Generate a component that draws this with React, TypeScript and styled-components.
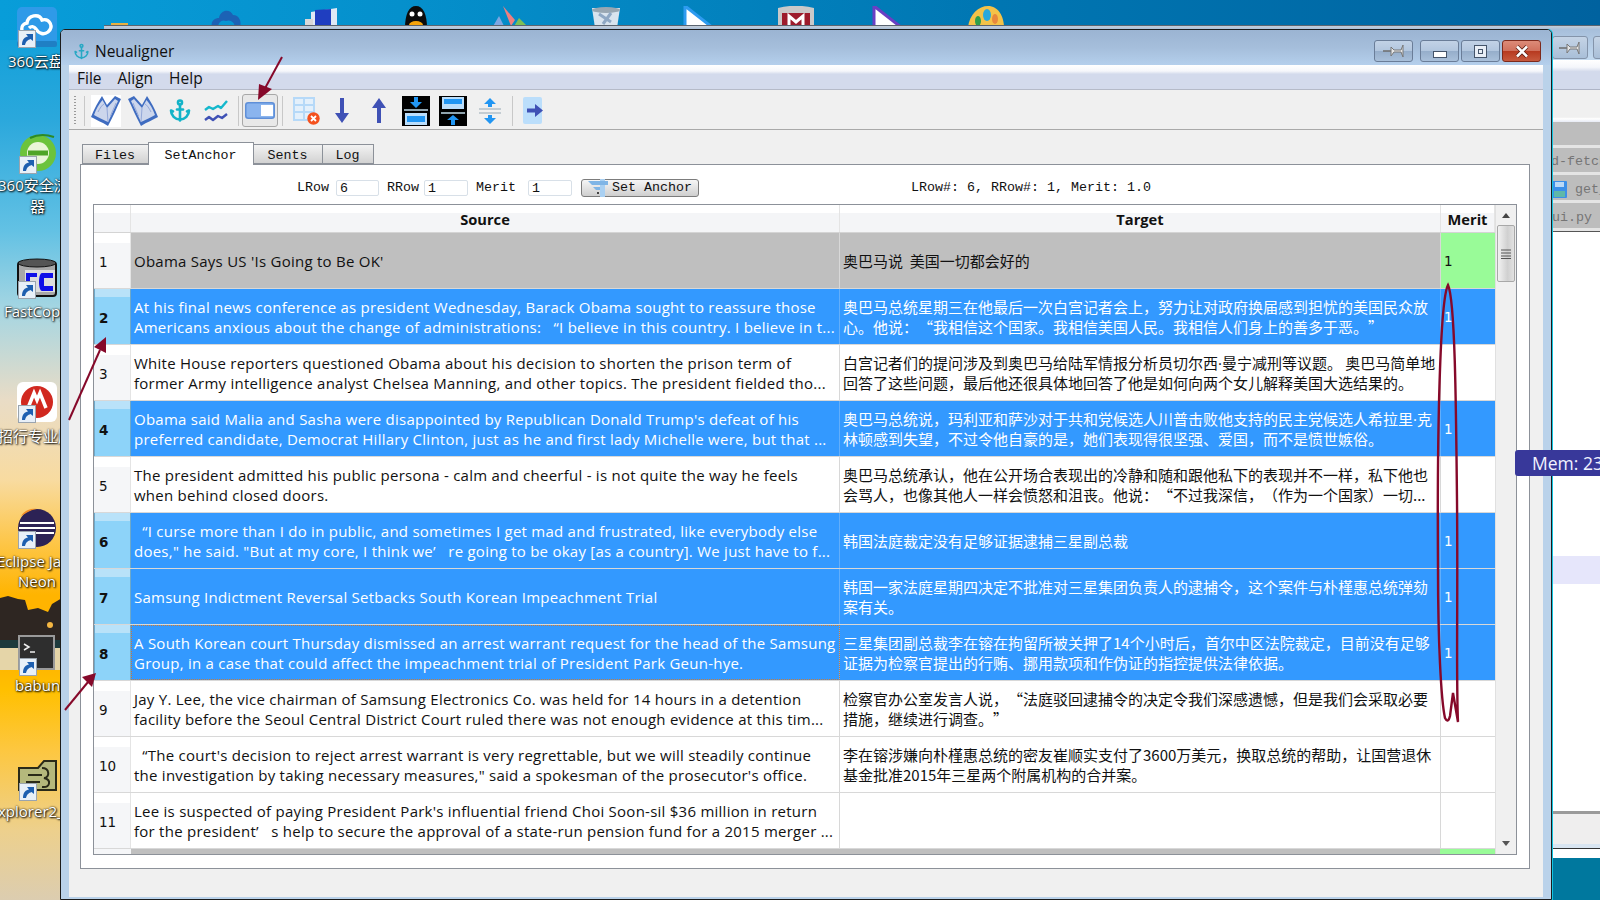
import { Anchor } from "lucide-react";
import styled, { createGlobalStyle } from "styled-components";

const GlobalStyle = createGlobalStyle`
  html, body {
    margin: 0;
    padding: 0;
    background: #000;
  }
`;

const UI_FONT = `"Open Sans", "Noto Sans CJK SC", sans-serif`;
const CJK_FONT = `"Noto Sans CJK SC", "Open Sans", sans-serif`;
const MONO_FONT = `"Liberation Mono", "Noto Sans CJK SC", monospace`;
const DIGIT_FONT = `"DejaVu Sans", sans-serif`;

const Desktop = styled.div`
  position: relative;
  width: 1600px;
  height: 900px;
  overflow: hidden;
  font-family: ${UI_FONT};
  background: linear-gradient(
    to bottom,
    #089dd9 0,
    #2ba8dc 120px,
    #62c1e4 230px,
    #a6d6e2 310px,
    #e9dcc6 400px,
    #f8dba0 480px,
    #fdc74c 540px,
    #ffb400 595px,
    #ffb400 660px,
    #ffc000 690px,
    #fdc740 750px,
    #edd08c 830px,
    #dccdb0 900px
  );
`;

const TopBand = styled.div`
  position: absolute;
  inset: 0 0 auto 0;
  height: 40px;
  background: linear-gradient(to right, #089dd9 0, #0590cc 400px, #0076b2 1000px, #00629f 1600px);
`;

const Skyline = styled.svg`
  position: absolute;
  left: 0;
  top: 590px;
`;

const TealCorner = styled.div`
  position: absolute;
  left: 1552px;
  right: 0;
  top: 857px;
  bottom: 0;
  background: #00789e;
`;

const TopIcons = styled.div`
  position: absolute;
  left: 178px;
  top: 6px;
  display: flex;
`;

const TopSlot = styled.div`
  width: 95px;
  height: 22px;
  display: flex;
  justify-content: center;
`;

const ShelfIcon = styled.div`
  position: absolute;
  left: 111px;
  top: 23px;
  width: 17px;
  height: 4px;
  background: #e8b040;
`;

const IconBox = styled.div<{ $x: number; $y: number }>`
  position: absolute;
  left: ${(p) => p.$x}px;
  top: ${(p) => p.$y}px;
  width: 40px;
  height: 40px;
`;

const ShortcutMark = styled.svg`
  position: absolute;
  left: 1px;
  bottom: -1px;
`;

const IconLabel = styled.div<{ $x: number; $y: number }>`
  position: absolute;
  left: ${(p) => p.$x}px;
  top: ${(p) => p.$y}px;
  color: #fff;
  font-size: 15px;
  line-height: 20px;
  white-space: nowrap;
  text-shadow: 0 0 2px #000, 1px 1px 2px #000;
`;

const BackWindow = styled.div`
  position: absolute;
  left: 104px;
  right: 0;
  top: 25px;
  height: 832px;
  display: flex;
  flex-direction: column;
  border-top: 1px solid #5b6470;
  background: #fff;
`;

const BackTitle = styled.div`
  height: 34px;
  flex: none;
  position: relative;
  background: linear-gradient(to bottom, #c5ced8 0, #a7bfdb 10%, #c3daf0 100%);
`;

const BackPin = styled.div`
  position: absolute;
  left: 1448px;
  top: 10px;
  width: 34px;
  height: 21px;
  display: flex;
  align-items: center;
  justify-content: center;
  border: 1px solid #8494aa;
  border-radius: 3px;
  background: linear-gradient(to bottom, #c5d4e6, #a9bfd8);
`;

const BackPinNext = styled(BackPin)`
  left: 1489px;
`;

const BackMenu = styled.div`
  height: 29px;
  flex: none;
  background: linear-gradient(to bottom, #fff 0, #f4f6fb 25%, #d3daec 40%, #d3daec 100%);
  border-bottom: 1px solid #aeb4c6;
`;

const BackStrip = styled.div`
  height: 32px;
  flex: none;
  background: linear-gradient(to bottom, #f0f0f0 0, #f0f0f0 85%, #fff 90%, #e6eaf4 100%);
`;

const BackFile = styled.div<{ $pad: number; $h: number }>`
  height: ${(p) => p.$h}px;
  flex: none;
  box-sizing: border-box;
  display: flex;
  align-items: center;
  gap: 8px;
  padding: 3px 0 0 ${(p) => p.$pad}px;
  background: #bdbdbd;
  border-bottom: 3px solid #e4e4e4;
  color: #757575;
  font: 13.33px ${MONO_FONT};
  white-space: nowrap;
`;

const BackSpacer = styled.div<{ $h: number; $bg?: string }>`
  height: ${(p) => p.$h}px;
  flex: none;
  background: ${(p) => p.$bg ?? "#fff"};
`;

const MainWindow = styled.div`
  position: absolute;
  left: 60px;
  right: 48px;
  top: 29px;
  bottom: 0;
  display: flex;
  flex-direction: column;
  border: 1px solid #1c1c1c;
  border-radius: 5px 5px 0 0;
  background: #bad2ea;
  box-shadow: 1px 0 0 #12c4e0;
`;

const TitleBar = styled.div`
  height: 35px;
  flex: none;
  box-sizing: border-box;
  display: flex;
  align-items: center;
  padding: 7px 10px 0 12px;
  border-radius: 4px 4px 0 0;
  background: linear-gradient(to bottom, #9bb4d2 0, #a5bedb 50%, #b4cfec 100%);
  color: #111;
  font-size: 15.5px;
`;

const TitleText = styled.span`
  margin-left: 5px;
  flex: 1;
`;

const WinButton = styled.div<{ $close?: boolean; $ml?: number }>`
  width: 39px;
  height: 22px;
  margin-left: ${(p) => p.$ml ?? 2}px;
  display: flex;
  align-items: center;
  justify-content: center;
  box-sizing: border-box;
  border: 1px solid ${(p) => (p.$close ? "#7d2a1c" : "#6a7d98")};
  border-radius: 3px;
  background: ${(p) =>
    p.$close
      ? "linear-gradient(to bottom, #dc8b78 0, #d0705c 50%, #b73a20 52%, #c75a3e 100%)"
      : "linear-gradient(to bottom, #c2d2e6 0, #b2c6de 50%, #96aecb 52%, #a9c0da 100%)"};
`;

const MinGlyph = styled.div`
  width: 12px;
  height: 5px;
  margin-top: 6px;
  background: #fff;
  border: 1px solid #44546a;
`;

const MaxGlyph = styled.div`
  width: 11px;
  height: 11px;
  display: flex;
  align-items: center;
  justify-content: center;
  background: #e8eef6;
  border: 1px solid #44546a;

  &::after {
    content: "";
    width: 3px;
    height: 3px;
    border: 1px solid #44546a;
  }
`;

const Client = styled.div`
  flex: 1;
  display: flex;
  flex-direction: column;
  margin: 0 8px 2px;
  min-height: 0;
  background: #f0f0f0;
`;

const MenuBar = styled.div`
  height: 25px;
  flex: none;
  display: flex;
  align-items: center;
  gap: 16px;
  padding: 2px 0 0 8px;
  box-sizing: border-box;
  background: linear-gradient(to bottom, #fff 0, #f6f7fb 25%, #d3daec 38%, #d3daec 100%);
  border-bottom: 1px solid #b5bac8;
  color: #111;
  font-size: 15.5px;
`;

const Toolbar = styled.div`
  height: 40px;
  flex: none;
  box-sizing: border-box;
  padding-top: 2px;
  display: flex;
  align-items: center;
  border-bottom: 1px solid #a9a9a9;
  background: #f0f0f0;
`;

const Grip = styled.div`
  width: 2px;
  height: 30px;
  margin-left: 5px;
  background-image: linear-gradient(to bottom, #9a9a9a 1px, transparent 1px);
  background-size: 2px 3px;
`;

const ToolSep = styled.div<{ $ml: number }>`
  width: 1px;
  height: 30px;
  margin-left: ${(p) => p.$ml}px;
  background: #c8c8c8;
`;

const Tool = styled.div<{ $w: number; $ml: number }>`
  width: ${(p) => p.$w}px;
  margin-left: ${(p) => p.$ml}px;
  flex: none;
  display: flex;
  align-items: center;
  justify-content: center;
`;

const ToggleFrame = styled.div`
  width: 36px;
  height: 33px;
  margin-left: 3px;
  display: flex;
  align-items: center;
  justify-content: center;
  box-sizing: border-box;
  border: 1px solid #a8a8a8;
  border-radius: 3px;
  background: #e8e8e8;
`;

const TabArea = styled.div`
  flex: 1;
  display: flex;
  flex-direction: column;
  padding: 12px 13px 28px 11px;
  min-height: 0;
`;

const TabRow = styled.div`
  height: 22px;
  flex: none;
  display: flex;
  align-items: flex-end;
  padding-left: 2px;
  position: relative;
  z-index: 1;
`;

const Tab = styled.div<{ $active?: boolean; $w: number }>`
  width: ${(p) => p.$w}px;
  height: ${(p) => (p.$active ? 23 : 20)}px;
  margin-bottom: ${(p) => (p.$active ? -1 : 0)}px;
  margin-right: -1px;
  flex: none;
  box-sizing: border-box;
  display: flex;
  align-items: center;
  justify-content: center;
  padding: 2px 1px 0 0;
  border: 1px solid #8c9199;
  border-bottom: ${(p) => (p.$active ? "none" : "1px solid #8c9199")};
  background: ${(p) => (p.$active ? "#fff" : "linear-gradient(to bottom, #f2f2f2, #d2d2d2)")};
  color: #111;
  font: 13.33px ${MONO_FONT};
`;

const Pane = styled.div`
  flex: 1;
  display: flex;
  flex-direction: column;
  min-height: 0;
  border: 1px solid #8c9199;
  background: #fff;
  padding: 0 12px 13px 12px;
`;

const FormRow = styled.div`
  height: 39px;
  flex: none;
  display: flex;
  align-items: center;
  padding: 6px 0 0 204px;
  box-sizing: border-box;
  color: #111;
  font: 13.33px ${MONO_FONT};
  white-space: pre;
`;

const FieldLabel = styled.span<{ $ml?: number }>`
  margin-left: ${(p) => p.$ml ?? 0}px;
`;

const FieldInput = styled.div<{ $w: number; $ml: number }>`
  width: ${(p) => p.$w}px;
  height: 16px;
  margin-left: ${(p) => p.$ml}px;
  padding: 1px 0 0 3px;
  box-sizing: border-box;
  display: flex;
  align-items: center;
  border: 1px solid #d8e0e8;
  border-radius: 2px;
  background: #fff;
`;

const AnchorButton = styled.div`
  width: 118px;
  height: 18px;
  margin-left: 9px;
  display: flex;
  align-items: center;
  box-sizing: border-box;
  padding-left: 6px;
  gap: 4px;
  border: 1px solid #7c7c7c;
  border-radius: 3px;
  background: linear-gradient(to bottom, #f6f6f6, #cfcfcf);
`;

const StatusText = styled.span`
  margin-left: 212px;
`;

const Table = styled.div`
  flex: 1;
  display: flex;
  min-height: 0;
  border: 1px solid #8c9199;
  background: #fff;
`;

const Grid = styled.div`
  flex: 1;
  min-width: 0;
  display: flex;
  flex-direction: column;
  overflow: hidden;
`;

const HeaderRow = styled.div`
  height: 28px;
  flex: none;
  display: flex;
  box-sizing: border-box;
  border-bottom: 1px solid #d4d4d4;
  background: linear-gradient(to bottom, #fff 0, #fff 30%, #f4f5f7 30%, #f4f5f7 100%);
`;

const HeaderCell = styled.div<{ $w: number }>`
  width: ${(p) => p.$w}px;
  flex: none;
  box-sizing: border-box;
  display: flex;
  align-items: center;
  justify-content: center;
  border-right: 1px solid #e4e4e4;
  color: #111;
  font-size: 14.67px;
  font-weight: 700;
  padding-top: 1px;
`;

const Row = styled.div`
  height: 56px;
  flex: none;
  display: flex;
  box-sizing: border-box;
  border-bottom: 1px solid #d8d8d8;
`;

const RowNumber = styled.div<{ $selected?: boolean }>`
  width: 37px;
  flex: none;
  box-sizing: border-box;
  display: flex;
  align-items: center;
  padding: 2px 0 0 4px;
  color: #111;
  font: ${(p) => (p.$selected ? 700 : 400)} 13.5px ${DIGIT_FONT};
  background: ${(p) =>
    p.$selected
      ? "linear-gradient(to bottom, #b9e2f9 0, #b9e2f9 8px, #8dd3f9 8px, #8dd3f9 100%)"
      : "linear-gradient(to bottom, #fff 0, #fff 10px, #f5f6f8 10px, #f5f6f8 100%)"};
  border-left: 1px solid ${(p) => (p.$selected ? "#6ea9c9" : "transparent")};
  border-right: 1px solid ${(p) => (p.$selected ? "#6ea9c9" : "#e4e4e4")};
`;

const cellBackground = (mode?: "grey" | "selected") =>
  mode === "grey" ? "#bfbfbf" : mode === "selected" ? "#3399ff" : "#fff";

const TextCell = styled.div<{ $w: number; $mode?: "grey" | "selected"; $focus?: boolean }>`
  width: ${(p) => p.$w}px;
  flex: none;
  box-sizing: border-box;
  display: flex;
  flex-direction: column;
  justify-content: center;
  padding-left: 3px;
  overflow: hidden;
  white-space: pre;
  font-size: 15px;
  line-height: 20px;
  color: ${(p) => (p.$mode === "selected" ? "#fff" : "#111")};
  background: ${(p) => cellBackground(p.$mode)};
  border-right: 1px solid ${(p) => (p.$mode === "selected" ? "#62aefb" : "#d8d8d8")};
  outline: ${(p) => (p.$focus ? "1px dotted #c77b3a" : "none")};
  outline-offset: -1px;
`;

const SourceCell = styled(TextCell)`
  letter-spacing: 0.25px;
`;

const TargetCell = styled(TextCell)`
  font-family: ${CJK_FONT};
  text-spacing-trim: space-all;
`;

const NarrowDot = styled.span`
  font-family: "Open Sans", sans-serif;
`;

const MeritCell = styled.div<{ $mode?: "green" | "selected" }>`
  width: 54px;
  flex: none;
  box-sizing: border-box;
  display: flex;
  align-items: center;
  padding: 0 0 0 3px;
  font: 13.5px ${DIGIT_FONT};
  color: ${(p) => (p.$mode === "selected" ? "#fff" : "#111")};
  background: ${(p) =>
    p.$mode === "green" ? "#99fb98" : p.$mode === "selected" ? "#3399ff" : "#fff"};
`;

const Sliver = styled.div`
  height: 6px;
  flex: none;
  display: flex;
`;

const SliverHead = styled.div`
  width: 37px;
  background: #f5f6f8;
`;

const SliverGrey = styled.div`
  flex: 1;
  background: #bfbfbf;
`;

const SliverGreen = styled.div`
  width: 55px;
  background: #99fb98;
`;

const Scrollbar = styled.div`
  width: 21px;
  flex: none;
  box-sizing: border-box;
  display: flex;
  flex-direction: column;
  align-items: center;
  padding-top: 8px;
  background: #f0f0f0;
  border-left: 1px solid #e0e0e0;
`;

const ScrollThumb = styled.div`
  width: 18px;
  height: 57px;
  margin-top: 7px;
  flex: none;
  box-sizing: border-box;
  display: flex;
  align-items: center;
  justify-content: center;
  border: 1px solid #a8a8a8;
  border-radius: 2px;
  background: linear-gradient(to right, #f2f2f2, #d0d0d0 60%, #e2e2e2);
`;

const ScrollTrack = styled.div`
  flex: 1;
`;

const ScrollArrow = styled.div<{ $down?: boolean }>`
  width: 0;
  height: 0;
  flex: none;
  border-left: 4px solid transparent;
  border-right: 4px solid transparent;
  ${(p) => (p.$down ? "border-top: 5px solid #555; margin-bottom: 8px;" : "border-bottom: 5px solid #444;")}
`;

const Annotations = styled.svg`
  position: absolute;
  inset: 0;
  pointer-events: none;
`;

const MemBadge = styled.div`
  position: absolute;
  left: 1515px;
  top: 450px;
  width: 85px;
  height: 26px;
  box-sizing: border-box;
  display: flex;
  align-items: center;
  padding-left: 17px;
  border-radius: 3px 0 0 3px;
  background: #38389a;
  color: #f2f2ff;
  font-size: 17.5px;
  white-space: nowrap;
  overflow: hidden;
`;

const FloppySvg = styled.svg`
  flex: none;
`;

type TableRow = {
  n: number;
  source: string[];
  target: string[];
  merit?: boolean;
  selected?: boolean;
  grey?: boolean;
  focus?: boolean;
};

const rows: TableRow[] = [
  {
    n: 1,
    grey: true,
    merit: true,
    source: ["Obama Says US 'Is Going to Be OK'"],
    target: ["奥巴马说  美国一切都会好的"],
  },
  {
    n: 2,
    selected: true,
    merit: true,
    source: [
      "At his final news conference as president Wednesday, Barack Obama sought to reassure those",
      "Americans anxious about the change of administrations:   “I believe in this country. I believe in t...",
    ],
    target: [
      "奥巴马总统星期三在他最后一次白宫记者会上，努力让对政府换届感到担忧的美国民众放",
      "心。他说：“我相信这个国家。我相信美国人民。我相信人们身上的善多于恶。”",
    ],
  },
  {
    n: 3,
    source: [
      "White House reporters questioned Obama about his decision to shorten the prison term of",
      "former Army intelligence analyst Chelsea Manning, and other topics. The president fielded tho...",
    ],
    target: [
      "白宫记者们的提问涉及到奥巴马给陆军情报分析员切尔西·曼宁减刑等议题。 奥巴马简单地",
      "回答了这些问题，最后他还很具体地回答了他是如何向两个女儿解释美国大选结果的。",
    ],
  },
  {
    n: 4,
    selected: true,
    merit: true,
    source: [
      "Obama said Malia and Sasha were disappointed by Republican Donald Trump's defeat of his",
      "preferred candidate, Democrat Hillary Clinton, just as he and first lady Michelle were, but that ...",
    ],
    target: [
      "奥巴马总统说，玛利亚和萨沙对于共和党候选人川普击败他支持的民主党候选人希拉里·克",
      "林顿感到失望，不过令他自豪的是，她们表现得很坚强、爱国，而不是愤世嫉俗。",
    ],
  },
  {
    n: 5,
    source: [
      "The president admitted his public persona - calm and cheerful - is not quite the way he feels",
      "when behind closed doors.",
    ],
    target: [
      "奥巴马总统承认，他在公开场合表现出的冷静和随和跟他私下的表现并不一样，私下他也",
      "会骂人，也像其他人一样会愤怒和沮丧。他说：“不过我深信，（作为一个国家）一切...",
    ],
  },
  {
    n: 6,
    selected: true,
    merit: true,
    source: [
      "  “I curse more than I do in public, and sometimes I get mad and frustrated, like everybody else",
      'does," he said. "But at my core, I think we’   re going to be okay [as a country]. We just have to f...',
    ],
    target: ["韩国法庭裁定没有足够证据逮捕三星副总裁"],
  },
  {
    n: 7,
    selected: true,
    merit: true,
    source: ["Samsung Indictment Reversal Setbacks South Korean Impeachment Trial"],
    target: [
      "韩国一家法庭星期四决定不批准对三星集团负责人的逮捕令，这个案件与朴槿惠总统弹劾",
      "案有关。",
    ],
  },
  {
    n: 8,
    selected: true,
    merit: true,
    focus: true,
    source: [
      "A South Korean court Thursday dismissed an arrest warrant request for the head of the Samsung",
      "Group, in a case that could affect the impeachment trial of President Park Geun-hye.",
    ],
    target: [
      "三星集团副总裁李在镕在拘留所被关押了14个小时后，首尔中区法院裁定，目前没有足够",
      "证据为检察官提出的行贿、挪用款项和作伪证的指控提供法律依据。",
    ],
  },
  {
    n: 9,
    source: [
      "Jay Y. Lee, the vice chairman of Samsung Electronics Co. was held for 14 hours in a detention",
      "facility before the Seoul Central District Court ruled there was not enough evidence at this tim...",
    ],
    target: [
      "检察官办公室发言人说，“法庭驳回逮捕令的决定令我们深感遗憾，但是我们会采取必要",
      "措施，继续进行调查。”",
    ],
  },
  {
    n: 10,
    source: [
      "  “The court's decision to reject arrest warrant is very regrettable, but we will steadily continue",
      'the investigation by taking necessary measures," said a spokesman of the prosecutor\'s office.',
    ],
    target: [
      "李在镕涉嫌向朴槿惠总统的密友崔顺实支付了3600万美元，换取总统的帮助，让国营退休",
      "基金批准2015年三星两个附属机构的合并案。",
    ],
  },
  {
    n: 11,
    source: [
      "Lee is suspected of paying President Park's influential friend Choi Soon-sil $36 million in return",
      "for the president’   s help to secure the approval of a state-run pension fund for a 2015 merger ...",
    ],
    target: [],
  },
];

// the CJK font draws the middle dot a full em wide, the reference has a narrow one
const TargetLine = ({ line }: { line: string }) => {
  const [before, after] = line.split("·");
  if (after === undefined) return <div>{line}</div>;
  return (
    <div>
      {before}
      <NarrowDot>·</NarrowDot>
      {after}
    </div>
  );
};

const PinIcon = () => (
  <svg width="24" height="16" viewBox="0 0 24 16">
    <path d="M1 8 L11 8" stroke="#6d6d6d" strokeWidth="1.5" />
    <path d="M9 4 L12 7 L19 7 L21 2 L21 14 L19 9 L12 9 L9 13 Z" fill="#e6e6e6" stroke="#777" strokeWidth="1" />
  </svg>
);

const CloseGlyph = () => (
  <svg width="14" height="13" viewBox="0 0 14 13">
    <path d="M2 1.5 L12 11.5 M12 1.5 L2 11.5" stroke="#5a1d12" strokeWidth="4" />
    <path d="M2 1.5 L12 11.5 M12 1.5 L2 11.5" stroke="#fff" strokeWidth="2.6" />
  </svg>
);

const Shortcut = () => (
  <ShortcutMark width="18" height="18" viewBox="0 0 18 18">
    <rect x="0.5" y="0.5" width="17" height="17" fill="#e8f0f8" stroke="#9aa4ae" />
    <path d="M4 15 C4 9 7 7 10 6.5 L8 4 L15 4 L15 11 L12.5 9 C10 10 8 11 7 15 Z" fill="#1d5fb0" />
  </ShortcutMark>
);

const BookIcon = ({ flip, white }: { flip?: boolean; white?: boolean }) => (
  <svg width="30" height="32" viewBox="0 0 30 32" style={{ transform: flip ? "scaleX(-1)" : undefined }}>
    {white && <rect width="30" height="32" fill="#fff" />}
    <path d="M0 22 C3 14 7 7 11 1 L16 10 L24 1 L30 4 C26 12 22 22 17 31 C11 27 5 25 0 22 Z" fill="#3f6cc0" />
    <path d="M3 20 C5 14 8 9 11.5 5 L16 13 L24 4 L27 6 C24 12 20 21 17 27 C12 25 7 22 3 20 Z" fill="#ccd6ec" />
    <path d="M16 13 L17 27 M7 17 C9 13 11 10 13 9 M25 8 C23 13 21 17 19.5 21" stroke="#94a8d8" strokeWidth="1" fill="none" />
  </svg>
);

const WaveIcon = () => (
  <svg width="24" height="24" viewBox="0 0 24 24" fill="none" strokeWidth="2.4" strokeLinejoin="round">
    <path d="M1 11 L5 8 L9 10 L14 7 L17 9 L23 2" stroke="#14b8cc" />
    <path d="M1 21 L5 18 L9 21 L14 17 L18 19 L23 15" stroke="#3f51b5" />
  </svg>
);

const ToggleIcon = () => (
  <svg width="30" height="17" viewBox="0 0 30 17">
    <rect x="0.75" y="0.75" width="28.5" height="15.5" rx="2.5" fill="#8ab4ee" stroke="#5f8fd8" strokeWidth="1.5" />
    <rect x="16" y="3" width="12" height="11" fill="#fff" />
  </svg>
);

const TableXIcon = () => (
  <svg width="27" height="28" viewBox="0 0 27 28">
    <rect width="22" height="24" fill="#b6d9f8" />
    <path d="M2 2 h8 v5 h-8 z M12 2 h8 v5 h-8 z M2 9 h8 v5 h-8 z M12 9 h8 v5 h-8 z M2 16 h8 v6 h-8 z M12 16 h8 v6 h-8 z" fill="#e4f0fb" />
    <circle cx="20.5" cy="21.5" r="6.2" fill="#f4511e" />
    <path d="M18 19 L23 24 M23 19 L18 24" stroke="#fff" strokeWidth="1.8" />
  </svg>
);

const VArrow = ({ up }: { up?: boolean }) => (
  <svg width="14" height="25" viewBox="0 0 14 25" style={{ transform: up ? "scaleY(-1)" : undefined }}>
    <path d="M5 0 H9 V15 H14 L7 25 L0 15 H5 Z" fill="#3f51b5" />
  </svg>
);

const MergeDownIcon = () => (
  <svg width="28" height="30" viewBox="0 0 28 30">
    <rect width="28" height="30" fill="#000" />
    <path d="M12 1 H16 V6 H20 L14 12 L8 6 H12 Z" fill="#2196f3" />
    <rect x="2" y="13" width="24" height="2" fill="#90a4ae" />
    <rect x="3" y="17" width="22" height="12" fill="#bbdefb" />
    <rect x="5" y="20" width="18" height="6" fill="#2196f3" />
  </svg>
);

const MergeUpIcon = () => (
  <svg width="28" height="30" viewBox="0 0 28 30">
    <rect width="28" height="30" fill="#000" />
    <rect x="3" y="1" width="22" height="12" fill="#bbdefb" />
    <rect x="5" y="3" width="18" height="5" fill="#2196f3" />
    <rect x="2" y="16" width="24" height="2" fill="#90a4ae" />
    <path d="M12 29 H16 V24 H20 L14 19 L8 24 H12 Z" fill="#2196f3" />
  </svg>
);

const SpreadIcon = () => (
  <svg width="22" height="26" viewBox="0 0 22 26">
    <rect y="10" width="22" height="2" fill="#c3ccd2" />
    <rect y="14" width="22" height="2" fill="#c3ccd2" />
    <path d="M11 0 L17 6 H13 V9 H9 V6 H5 Z M11 26 L17 20 H13 V17 H9 V20 H5 Z" fill="#2196f3" />
  </svg>
);

const NextIcon = () => (
  <svg width="20" height="27" viewBox="0 0 20 27">
    <rect width="19" height="27" rx="2" fill="#bbdefb" />
    <path d="M4 11.5 H12 V7 L20 13.5 L12 20 V15.5 H4 Z" fill="#3f51b5" />
  </svg>
);

const CaliperIcon = () => (
  <svg width="20" height="18" viewBox="0 0 20 18">
    <path d="M12 0 H17 V18 H12 Z" fill="#a9d0f2" />
    <path d="M0 2 H20 V6 H4 Z" fill="#7fb5e6" />
    <path d="M5 8 H12 V11 H8 Z" fill="#7fb5e6" />
    <rect x="9" y="13" width="2" height="2" fill="#444" />
  </svg>
);

const FloppyIcon = () => (
  <FloppySvg width="15" height="17" viewBox="0 0 15 17">
    <rect width="15" height="17" rx="1" fill="#3d8fe8" />
    <rect x="3" y="1" width="9" height="5" fill="#bcd9f6" />
    <rect x="2" y="10" width="11" height="6" fill="#5fb8a8" />
  </FloppySvg>
);

const GripLines = () => (
  <svg width="10" height="10" viewBox="0 0 10 10">
    <path d="M0 1 H10 M0 4 H10 M0 7 H10 M0 9.5 H10" stroke="#555" strokeWidth="1" />
  </svg>
);

export default function App() {
  return (
    <Desktop>
      <GlobalStyle />
      <TopBand />
      <Skyline width="62" height="90" viewBox="0 0 62 90">
        <path d="M0 8 L8 6 L18 9 L25 10 L28 20 L38 18 L48 22 L52 14 L62 8 V58 H0 Z" fill="#2e2622" />
        <rect x="0" y="50" width="62" height="8" fill="#1d3a3c" />
        <circle cx="50" cy="35" r="3" fill="#f5b642" />
        <rect x="0" y="58" width="62" height="22" fill="#e5d5a8" />
      </Skyline>
      <TealCorner />

      <ShelfIcon />
      <TopIcons>
        <TopSlot>
          <svg width="32" height="22" viewBox="0 0 32 22">
            <path d="M2 22 C0 14 6 12 9 12 C10 4 20 2 23 9 C29 9 32 15 30 22 H25 C25 16 20 13 16 15 C12 13 8 16 8 22 Z" fill="#1c62b5" />
          </svg>
        </TopSlot>
        <TopSlot>
          <svg width="36" height="22" viewBox="0 0 36 22">
            <path d="M8 6 L34 2 V21 L8 21 Z" fill="#dfe8f5" />
            <path d="M12 4 L28 3 V21 H12 Z" fill="#1f3ec0" />
            <rect x="2" y="13" width="8" height="8" fill="#d8d8d8" />
          </svg>
        </TopSlot>
        <TopSlot>
          <svg width="28" height="22" viewBox="0 0 28 22">
            <path d="M3 22 C3 8 7 0 14 0 C21 0 25 8 25 22 Z" fill="#0c0c0c" />
            <ellipse cx="14" cy="19" rx="7" ry="4" fill="#f5a40c" />
            <circle cx="10" cy="8" r="2.5" fill="#fff" />
            <circle cx="18" cy="8" r="2.5" fill="#fff" />
            <rect x="1" y="20" width="26" height="2" fill="#b51c1c" />
          </svg>
        </TopSlot>
        <TopSlot>
          <svg width="40" height="22" viewBox="0 0 40 22">
            <path d="M12 0 L24 14 L20 20 Z" fill="#ee7f7f" />
            <path d="M8 10 L1 22 L14 22 Z" fill="#7fa6e0" />
            <path d="M28 12 L38 22 L22 22 Z" fill="#7dbf55" />
          </svg>
        </TopSlot>
        <TopSlot>
          <svg width="30" height="22" viewBox="0 0 30 22">
            <path d="M1 2 H29 L26 22 H4 Z" fill="#d9e4ee" />
            <ellipse cx="15" cy="4" rx="14" ry="3" fill="#99a7b2" />
            <path d="M8 8 L20 16 M20 7 L12 18" stroke="#8fa8c4" strokeWidth="3" />
          </svg>
        </TopSlot>
        <TopSlot>
          <svg width="30" height="22" viewBox="0 0 30 22" style={{ marginRight: 6 }}>
            <path d="M2 0 L30 22 H2 Z" fill="#fff" stroke="#2e9bf0" strokeWidth="3" />
          </svg>
        </TopSlot>
        <TopSlot>
          <svg width="38" height="22" viewBox="0 0 38 22">
            <path d="M1 2 C12 -1 26 -1 37 2 V22 H1 Z" fill="#c9c9c9" />
            <rect x="5" y="7" width="28" height="15" fill="#9d1c2c" />
            <path d="M12 22 V10 L19 16 L26 10 V22" fill="none" stroke="#fff" strokeWidth="3" />
          </svg>
        </TopSlot>
        <TopSlot>
          <svg width="30" height="22" viewBox="0 0 30 22" style={{ marginRight: 8 }}>
            <path d="M2 0 L30 22 H2 Z" fill="#fff" stroke="#6a3fc4" strokeWidth="3" />
          </svg>
        </TopSlot>
        <TopSlot>
          <svg width="38" height="22" viewBox="0 0 38 22">
            <path d="M1 22 C2 8 12 0 21 0 C31 0 37 10 37 22 Z" fill="#f4c248" />
            <ellipse cx="20" cy="9" rx="4" ry="6" fill="#2ba8dc" />
            <ellipse cx="11" cy="15" rx="3" ry="5" fill="#2f9e4a" />
            <ellipse cx="28" cy="13" rx="3" ry="5" fill="#e8883c" />
          </svg>
        </TopSlot>
      </TopIcons>

      <IconBox $x={17} $y={7}>
        <svg width="40" height="40" viewBox="0 0 40 40">
          <rect width="40" height="40" rx="5" fill="#2f9ae8" />
          <rect y="34" width="40" height="6" rx="2" fill="#1f7fc4" />
          <path d="M10 27 C3 27 3 17 10 16 C11 8 22 6 25 13 C33 11 37 20 31 25 C27 28 22 27 19 22 C17 19 14 19 12 21" fill="none" stroke="#fff" strokeWidth="3.4" />
        </svg>
        <Shortcut />
      </IconBox>
      <IconLabel $x={8} $y={51}>360云盘</IconLabel>

      <IconBox $x={18} $y={133}>
        <svg width="40" height="40" viewBox="0 0 40 40">
          <circle cx="20" cy="20" r="18" fill="#6cc33c" />
          <circle cx="20" cy="20" r="11" fill="#eaf6d8" />
          <path d="M10 20 H30" stroke="#4fa528" strokeWidth="5" />
          <path d="M12 5 C22 0 30 2 36 4" stroke="#2c8a26" strokeWidth="2" fill="none" />
        </svg>
        <Shortcut />
      </IconBox>
      <IconLabel $x={-2} $y={175}>360安全浏览</IconLabel>
      <IconLabel $x={30} $y={196}>器</IconLabel>

      <IconBox $x={17} $y={258}>
        <svg width="40" height="40" viewBox="0 0 40 40">
          <rect x="1" y="4" width="38" height="34" rx="3" fill="#a8a8a8" stroke="#111" strokeWidth="2" />
          <ellipse cx="20" cy="5" rx="19" ry="4" fill="#555" stroke="#111" />
          <rect x="8" y="12" width="30" height="22" fill="#ddd" />
          <path d="M9 15 H20 V19 H13 V23 H19 V27 H13 V33 H9 Z" fill="#1010e8" />
          <path d="M36 15 H25 C21 15 21 33 25 33 H36 V28 H27 V20 H36 Z" fill="#1010e8" />
        </svg>
        <Shortcut />
      </IconBox>
      <IconLabel $x={4} $y={301}>FastCopy</IconLabel>

      <IconBox $x={17} $y={382}>
        <svg width="40" height="40" viewBox="0 0 40 40">
          <rect width="40" height="40" rx="6" fill="#fff" />
          <circle cx="20" cy="20" r="16" fill="#d1281f" />
          <path d="M11 26 L17 11 L20 18 L23 11 L29 26" fill="none" stroke="#fff" strokeWidth="3.5" />
        </svg>
        <Shortcut />
      </IconBox>
      <IconLabel $x={-2} $y={426}>招行专业版</IconLabel>

      <IconBox $x={17} $y={508}>
        <svg width="40" height="40" viewBox="0 0 40 40">
          <circle cx="20" cy="20" r="19" fill="#2c2255" />
          <path d="M3 15 H37 M2 20 H38 M3 25 H37" stroke="#fff" strokeWidth="2" />
          <path d="M4 8 C8 2 14 0 20 1 C12 2 8 6 4 8 Z" fill="#f08a24" />
        </svg>
        <Shortcut />
      </IconBox>
      <IconLabel $x={-3} $y={551}>Eclipse Ja</IconLabel>
      <IconLabel $x={18} $y={571}>Neon</IconLabel>

      <IconBox $x={18} $y={635}>
        <svg width="38" height="38" viewBox="0 0 38 38">
          <rect x="1" y="1" width="35" height="33" fill="#2e2e2e" stroke="#9a9a9a" strokeWidth="2" />
          <path d="M6 9 L11 12 L6 15 M12 17 H17" stroke="#eee" strokeWidth="1.5" fill="none" />
        </svg>
        <Shortcut />
      </IconBox>
      <IconLabel $x={15} $y={675}>babun</IconLabel>

      <IconBox $x={18} $y={760}>
        <svg width="40" height="38" viewBox="0 0 40 38">
          <path d="M1 8 H20 L26 1 H38 V30 H1 Z" fill="#b5b87c" stroke="#2a2a18" strokeWidth="2" />
          <path d="M10 15 H24 M24 8 C32 8 32 18 26 18 C34 20 32 28 24 27 M8 22 H22" fill="none" stroke="#2a2a18" strokeWidth="2" />
        </svg>
        <Shortcut />
      </IconBox>
      <IconLabel $x={-2} $y={801}>xplorer2_</IconLabel>

      <BackWindow>
        <BackTitle>
          <BackPin>
            <PinIcon />
          </BackPin>
          <BackPinNext />
        </BackTitle>
        <BackMenu />
        <BackStrip />
        <BackFile $pad={1447} $h={26} />
        <BackFile $pad={1447} $h={27}>
          d-fetch
        </BackFile>
        <BackFile $pad={1448} $h={28}>
          <FloppyIcon />
          get_
        </BackFile>
        <BackFile $pad={1440} $h={28}>
          gui.py
        </BackFile>
        <BackSpacer $h={1} $bg="#555" />
        <BackSpacer $h={324} />
        <BackSpacer $h={28} $bg="#e6e6fb" />
        <BackSpacer $h={227} />
        <BackSpacer $h={3} $bg="#9a9a9a" />
        <BackSpacer $h={30} $bg="#efeeee" />
        <BackSpacer $h={4} $bg="#d9e5f1" />
        <BackSpacer $h={1} $bg="#333" />
      </BackWindow>

      <MainWindow>
        <TitleBar>
          <Anchor size={17} color="#27a8c4" strokeWidth={2.2} />
          <TitleText>Neualigner</TitleText>
          <WinButton>
            <PinIcon />
          </WinButton>
          <WinButton $ml={7}>
            <MinGlyph />
          </WinButton>
          <WinButton>
            <MaxGlyph />
          </WinButton>
          <WinButton $close>
            <CloseGlyph />
          </WinButton>
        </TitleBar>
        <Client>
          <MenuBar>
            <span>File</span>
            <span>Align</span>
            <span>Help</span>
          </MenuBar>
          <Toolbar>
            <Grip />
            <ToolSep $ml={8} />
            <Tool $w={30} $ml={6}>
              <BookIcon white />
            </Tool>
            <Tool $w={30} $ml={7}>
              <BookIcon flip />
            </Tool>
            <Tool $w={24} $ml={10}>
              <Anchor size={27} color="#12b3c8" strokeWidth={2.6} />
            </Tool>
            <Tool $w={24} $ml={12}>
              <WaveIcon />
            </Tool>
            <ToolSep $ml={10} />
            <ToggleFrame>
              <ToggleIcon />
            </ToggleFrame>
            <ToolSep $ml={4} />
            <Tool $w={27} $ml={10}>
              <TableXIcon />
            </Tool>
            <Tool $w={14} $ml={15}>
              <VArrow />
            </Tool>
            <Tool $w={14} $ml={23}>
              <VArrow up />
            </Tool>
            <Tool $w={28} $ml={16}>
              <MergeDownIcon />
            </Tool>
            <Tool $w={28} $ml={9}>
              <MergeUpIcon />
            </Tool>
            <Tool $w={22} $ml={12}>
              <SpreadIcon />
            </Tool>
            <ToolSep $ml={11} />
            <Tool $w={20} $ml={10}>
              <NextIcon />
            </Tool>
          </Toolbar>
          <TabArea>
            <TabRow>
              <Tab $w={67}>Files</Tab>
              <Tab $w={106} $active>
                SetAnchor
              </Tab>
              <Tab $w={70}>Sents</Tab>
              <Tab $w={52}>Log</Tab>
            </TabRow>
            <Pane>
              <FormRow>
                <FieldLabel>LRow</FieldLabel>
                <FieldInput $w={43} $ml={7}>6</FieldInput>
                <FieldLabel $ml={8}>RRow</FieldLabel>
                <FieldInput $w={44} $ml={5}>1</FieldInput>
                <FieldLabel $ml={8}>Merit</FieldLabel>
                <FieldInput $w={44} $ml={12}>1</FieldInput>
                <AnchorButton>
                  <CaliperIcon />
                  <span>Set Anchor</span>
                </AnchorButton>
                <StatusText>LRow#: 6, RRow#: 1, Merit: 1.0</StatusText>
              </FormRow>
              <Table>
                <Grid>
                  <HeaderRow>
                    <HeaderCell $w={37} />
                    <HeaderCell $w={709}>Source</HeaderCell>
                    <HeaderCell $w={601}>Target</HeaderCell>
                    <HeaderCell $w={54}>Merit</HeaderCell>
                  </HeaderRow>
                  {rows.map((row) => {
                    const mode = row.grey ? "grey" : row.selected ? "selected" : undefined;
                    return (
                      <Row key={row.n}>
                        <RowNumber $selected={row.selected}>{row.n}</RowNumber>
                        <SourceCell $w={709} $mode={mode} $focus={row.focus}>
                          {row.source.map((line) => (
                            <div key={line}>{line}</div>
                          ))}
                        </SourceCell>
                        <TargetCell $w={601} $mode={mode}>
                          {row.target.map((line) => (
                            <TargetLine key={line} line={line} />
                          ))}
                        </TargetCell>
                        <MeritCell $mode={row.grey ? "green" : row.selected ? "selected" : undefined}>
                          {row.merit ? "1" : ""}
                        </MeritCell>
                      </Row>
                    );
                  })}
                  <Sliver>
                    <SliverHead />
                    <SliverGrey />
                    <SliverGreen />
                  </Sliver>
                </Grid>
                <Scrollbar>
                  <ScrollArrow />
                  <ScrollThumb>
                    <GripLines />
                  </ScrollThumb>
                  <ScrollTrack />
                  <ScrollArrow $down />
                </Scrollbar>
              </Table>
            </Pane>
          </TabArea>
        </Client>
      </MainWindow>

      <Annotations width="1600" height="900" viewBox="0 0 1600 900" fill="none" stroke="#86092a" strokeWidth="2">
        <path d="M282 57 L263 92" />
        <path d="M258 100 L259 84 L272 89 Z" fill="#86092a" stroke="none" />
        <path d="M69 420 L100 350" />
        <path d="M106 337 L94 347 L106 353 Z" fill="#86092a" stroke="none" />
        <path d="M65 710 L88 682" />
        <path d="M96 673 L82 677 L92 687 Z" fill="#86092a" stroke="none" />
        <path
          d="M1448 285 C1440 300 1437 430 1438 570 C1438 640 1441 700 1445 718 Q1448 724 1450 716 L1453 693 L1458 722 C1456 680 1458 600 1457 500 C1456 400 1455 300 1448 285 Z"
          strokeWidth="2.4"
        />
      </Annotations>

      <MemBadge>Mem: 23</MemBadge>
    </Desktop>
  );
}
